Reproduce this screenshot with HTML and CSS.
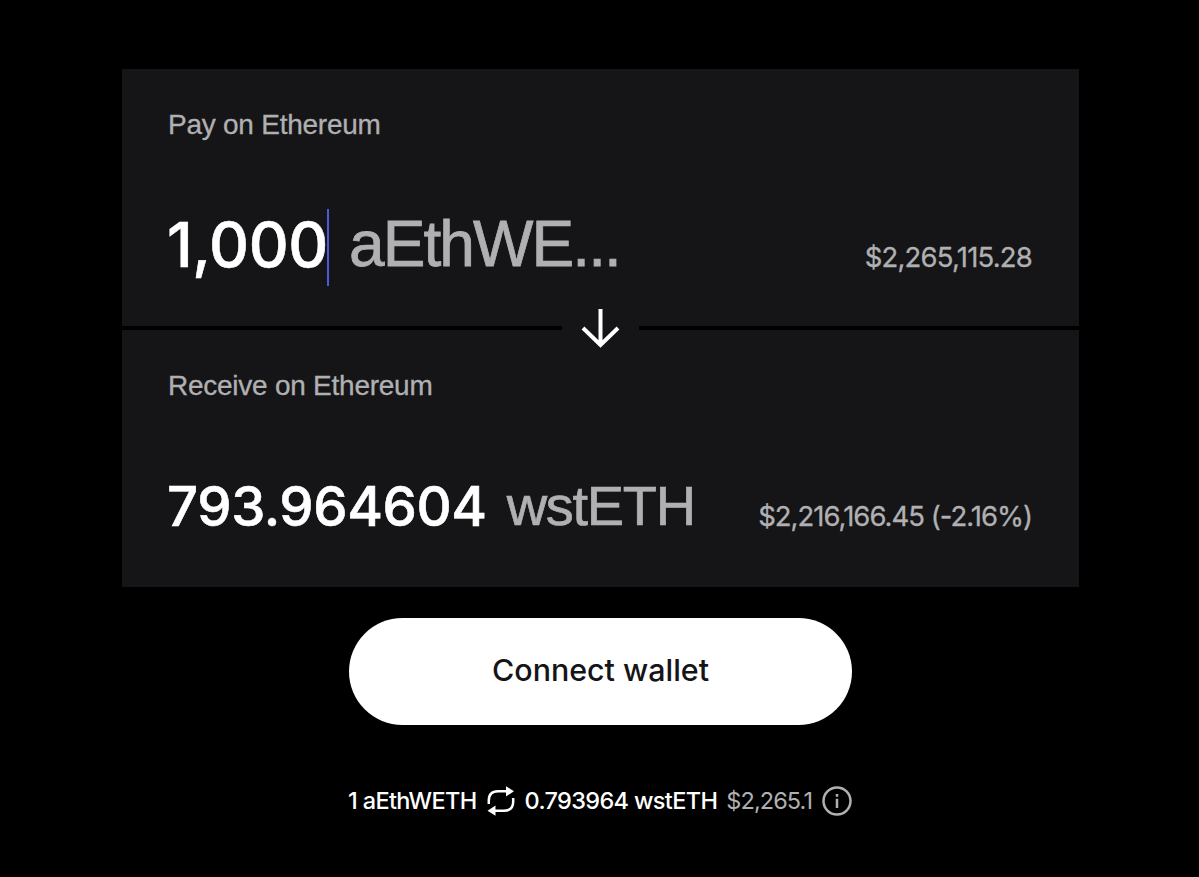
FILE: index.html
```html
<!DOCTYPE html>
<html lang="en">
<head>
<meta charset="UTF-8" />
<meta name="viewport" content="width=device-width, initial-scale=1" />
<title>Swap</title>
<link rel="stylesheet" href="styles.css">
</head>
<body>

<main class="swap">
  <section class="panel pay">
    <div class="label">Pay on Ethereum</div>
    <div class="row">
      <div class="amount"><span class="number">1,000</span><span class="caret"></span><span class="token">aEthWE...</span></div>
      <div class="value">$2,265,115.28</div>
    </div>
    <div class="switch">
      <svg width="40" height="40" viewBox="0 0 40 40" fill="none" stroke="#fff" stroke-width="4">
        <path d="M19.5 0V36M2 19L19.5 36L37 19" />
      </svg>
    </div>
  </section>

  <section class="panel receive">
    <div class="label">Receive on Ethereum</div>
    <div class="row">
      <div class="amount"><span class="number">793.964604</span><span class="token">wstETH</span></div>
      <div class="value">$2,216,166.45 (-2.16%)</div>
    </div>
  </section>

  <button class="connect"><span>Connect wallet</span></button>

  <div class="rate">
    <span class="from">1 aEthWETH</span>
    <svg class="swap-icon" width="28" height="30" viewBox="0 0 28 30" fill="none" stroke="#fff" stroke-width="2.5">
      <path d="M1.8 18V14.5Q1.8 5.2 11 5.2H20M26.2 12V15.5Q26.2 24.8 17 24.8H8" />
      <path d="M19 .2L27 5.3L19 10.4ZM8.5 19.6L.5 24.7L8.5 29.8Z" fill="#fff" stroke="none" />
    </svg>
    <span class="to">0.793964 wstETH</span>
    <span class="usd">$2,265.1</span>
    <svg class="info" width="30" height="30" viewBox="0 0 30 30" fill="none" stroke="#b0b0b2" stroke-width="2.5">
      <circle cx="15" cy="15" r="13.5" />
      <path d="M15 12.8V22M15 8V10.8" />
    </svg>
  </div>
</main>

</body>
</html>
```
FILE: styles.css
```css
* { box-sizing: border-box; }
body { margin: 0; background: #000; color: #fff; font-family: Inter, "Liberation Sans", sans-serif; }
.swap { width: 957px; margin: 69px 0 0 122px; display: flex; flex-direction: column; align-items: center; }
.panel { position: relative; width: 100%; height: 257px; padding: 38px 47px 0 46px; background: #151517; }
.receive { margin-top: 4px; }
.label, .token { font-family: "Liberation Sans", Arial, sans-serif; color: #b0b0b2; }
.label { font-size: 28px; line-height: 36px; letter-spacing: -0.25px; white-space: nowrap; -webkit-text-stroke: 0.3px #b0b0b2; }
.row { display: flex; justify-content: space-between; align-items: baseline; white-space: nowrap; }
.pay .row { margin-top: 64px; }
.receive .row { margin-top: 64px; }
.amount { line-height: 76px; }
.number { font-weight: 500; letter-spacing: -0.4px; -webkit-text-stroke: 0.6px #fff; }
.pay .number { font-size: 62px; margin-left: -1px; }
.receive .number { font-size: 54.5px; margin-left: -1px; }
.token { line-height: 1; vertical-align: 1px; }
.pay .token { font-size: 64px; letter-spacing: -1.9px; margin-left: 20px; -webkit-text-stroke: 0.8px #b0b0b2; }
.receive .token { font-size: 56px; letter-spacing: -1.3px; margin-left: 20px; -webkit-text-stroke: 0.7px #b0b0b2; }
.caret { display: inline-block; width: 2px; height: 77px; margin: 0 0 0 -1px; vertical-align: -19px; background: #4a5bd8; }
.value { font-size: 27.5px; letter-spacing: -0.8px; color: #b0b0b2; -webkit-text-stroke: 0.3px #b0b0b2; }
.pay .value { line-height: 1; }
.receive .value { letter-spacing: -1px; margin-bottom: 1px; }

/* bridges the gap between the two panels */
.switch { position: absolute; left: 440px; bottom: -43px; width: 77px; height: 80px; display: flex; align-items: center; justify-content: center; background: #151517; border-radius: 20px; z-index: 1; }

.connect { width: 503px; height: 107px; margin-top: 31px; padding: 0 0 4px; border: none; border-radius: 54px; background: #fff; color: #151517; font-family: inherit; font-size: 30.4px; font-weight: 500; cursor: pointer; }
.rate { display: flex; align-items: center; width: 503px; height: 30px; margin-top: 61px; font-size: 23.5px; font-weight: 500; letter-spacing: -0.65px; line-height: 28px; white-space: nowrap; }
.rate svg { flex-shrink: 0; }
.from { margin-left: -1px; }
.swap-icon { margin: 0 10px 0 10px; }
.usd { margin-left: 9px; color: #b0b0b2; font-weight: 400; letter-spacing: -0.9px; }
.info { margin-left: auto; }
```
